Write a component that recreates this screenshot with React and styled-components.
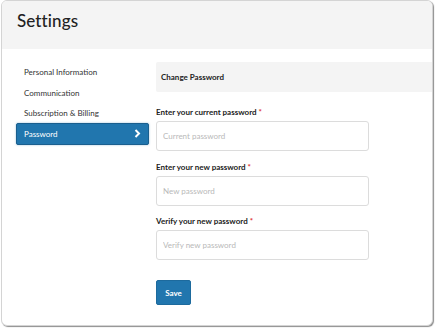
import React from 'react';
import styled, { createGlobalStyle } from 'styled-components';

const GlobalStyle = createGlobalStyle`
  body {
    margin: 0;
    background: #ffffff;
    font-family: Lato, "Open Sans", sans-serif;
  }
`;

const menu = [
  'Personal Information',
  'Communication',
  'Subscription & Billing',
  'Password',
];

const fields = [
  { label: 'Enter your current password', placeholder: 'Current password' },
  { label: 'Enter your new password', placeholder: 'New password' },
  { label: 'Verify your new password', placeholder: 'Verify new password' },
];

const App = () => {
  return (
    <Page>
      <GlobalStyle />
      <Card>
        <Header>
          <Title>Settings</Title>
        </Header>
        <Body>
          <Sidebar>
            {menu.map((item) => (
              <MenuItem key={item} active={item === 'Password'}>
                {item}
                {item === 'Password' && (
                  <svg width="7" height="9" viewBox="0 0 7 9">
                    <polyline
                      points="1.5,1 5,4.5 1.5,8"
                      fill="none"
                      stroke="#ffffff"
                      strokeWidth="2"
                    />
                  </svg>
                )}
              </MenuItem>
            ))}
          </Sidebar>
          <Main>
            <SectionBar>Change Password</SectionBar>
            <Form>
              {fields.map((f) => (
                <Field key={f.label}>
                  <Label>
                    {f.label} <Req>*</Req>
                  </Label>
                  <Input type="password" placeholder={f.placeholder} />
                </Field>
              ))}
            </Form>
            <SaveButton>Save</SaveButton>
          </Main>
        </Body>
      </Card>
    </Page>
  );
};

const Page = styled.div`
  padding: 0 2px 0 1px;
  width: 435px;
  height: 328px;
  box-sizing: border-box;
`;

const Card = styled.div`
  width: 432px;
  height: 326px;
  box-sizing: border-box;
  border: 1px solid #d4d4d4;
  border-radius: 6px;
  box-shadow: 1px 1px 1px rgba(0, 0, 0, 0.45);
  overflow: hidden;
  background: #ffffff;
`;

const Header = styled.div`
  height: 48px;
  background: #f4f4f4;
  display: flex;
  align-items: center;
  padding: 0 0 9px 15px;
  box-sizing: border-box;
`;

const Title = styled.h1`
  margin: 0;
  font-family: Lato, "Open Sans", sans-serif;
  font-size: 17px;
  font-weight: 500;
  color: #222222;
  letter-spacing: 0.1px;
`;

const Body = styled.div`
  display: flex;
  gap: 7px;
  padding: 13px 0 0 14px;
`;

const Sidebar = styled.div`
  width: 133px;
  display: flex;
  flex-direction: column;
`;

const MenuItem = styled.div`
  height: ${(p) => (p.active ? '22px' : '20.5px')};
  display: flex;
  align-items: center;
  justify-content: space-between;
  padding: 0 7px 0 7px;
  box-sizing: border-box;
  font-size: 8px;
  color: ${(p) => (p.active ? '#ffffff' : '#333333')};
  background: ${(p) => (p.active ? '#2176ae' : 'transparent')};
  border: 1px solid ${(p) => (p.active ? '#1a5f8e' : 'transparent')};
  border-radius: 2px;
  box-shadow: ${(p) => (p.active ? '0 0 2px rgba(33, 118, 174, 0.5)' : 'none')};
  margin-top: ${(p) => (p.active ? '-1px' : '0')};
`;

const Main = styled.div`
  flex: 1;
  display: flex;
  flex-direction: column;
`;

const SectionBar = styled.div`
  height: 30px;
  background: #f4f4f4;
  display: flex;
  align-items: center;
  padding-left: 5px;
  font-size: 8px;
  font-weight: 700;
  color: #222222;
  border-radius: 2px 0 0 2px;
`;

const Form = styled.div`
  display: flex;
  flex-direction: column;
  gap: 10.5px;
  margin-top: 15px;
`;

const Field = styled.div`
  display: flex;
  flex-direction: column;
  gap: 4px;
`;

const Label = styled.label`
  font-size: 8px;
  font-weight: 700;
  line-height: 10px;
  color: #222222;
`;

const Req = styled.span`
  color: #e03131;
`;

const Input = styled.input`
  width: 213px;
  height: 30px;
  box-sizing: border-box;
  border: 1px solid #dcdcdc;
  border-radius: 3px;
  padding: 0 6px;
  font-family: Lato, "Open Sans", sans-serif;
  font-size: 8px;
  outline: none;

  &::placeholder {
    color: #b9b9b9;
  }
`;

const SaveButton = styled.button`
  margin-top: 20px;
  width: 35px;
  height: 25px;
  background: #2176ae;
  border: 1px solid #1d6a9d;
  border-radius: 2px;
  color: #ffffff;
  font-family: Lato, "Open Sans", sans-serif;
  font-size: 8px;
  font-weight: 700;
  padding: 0;
`;

export default App;
